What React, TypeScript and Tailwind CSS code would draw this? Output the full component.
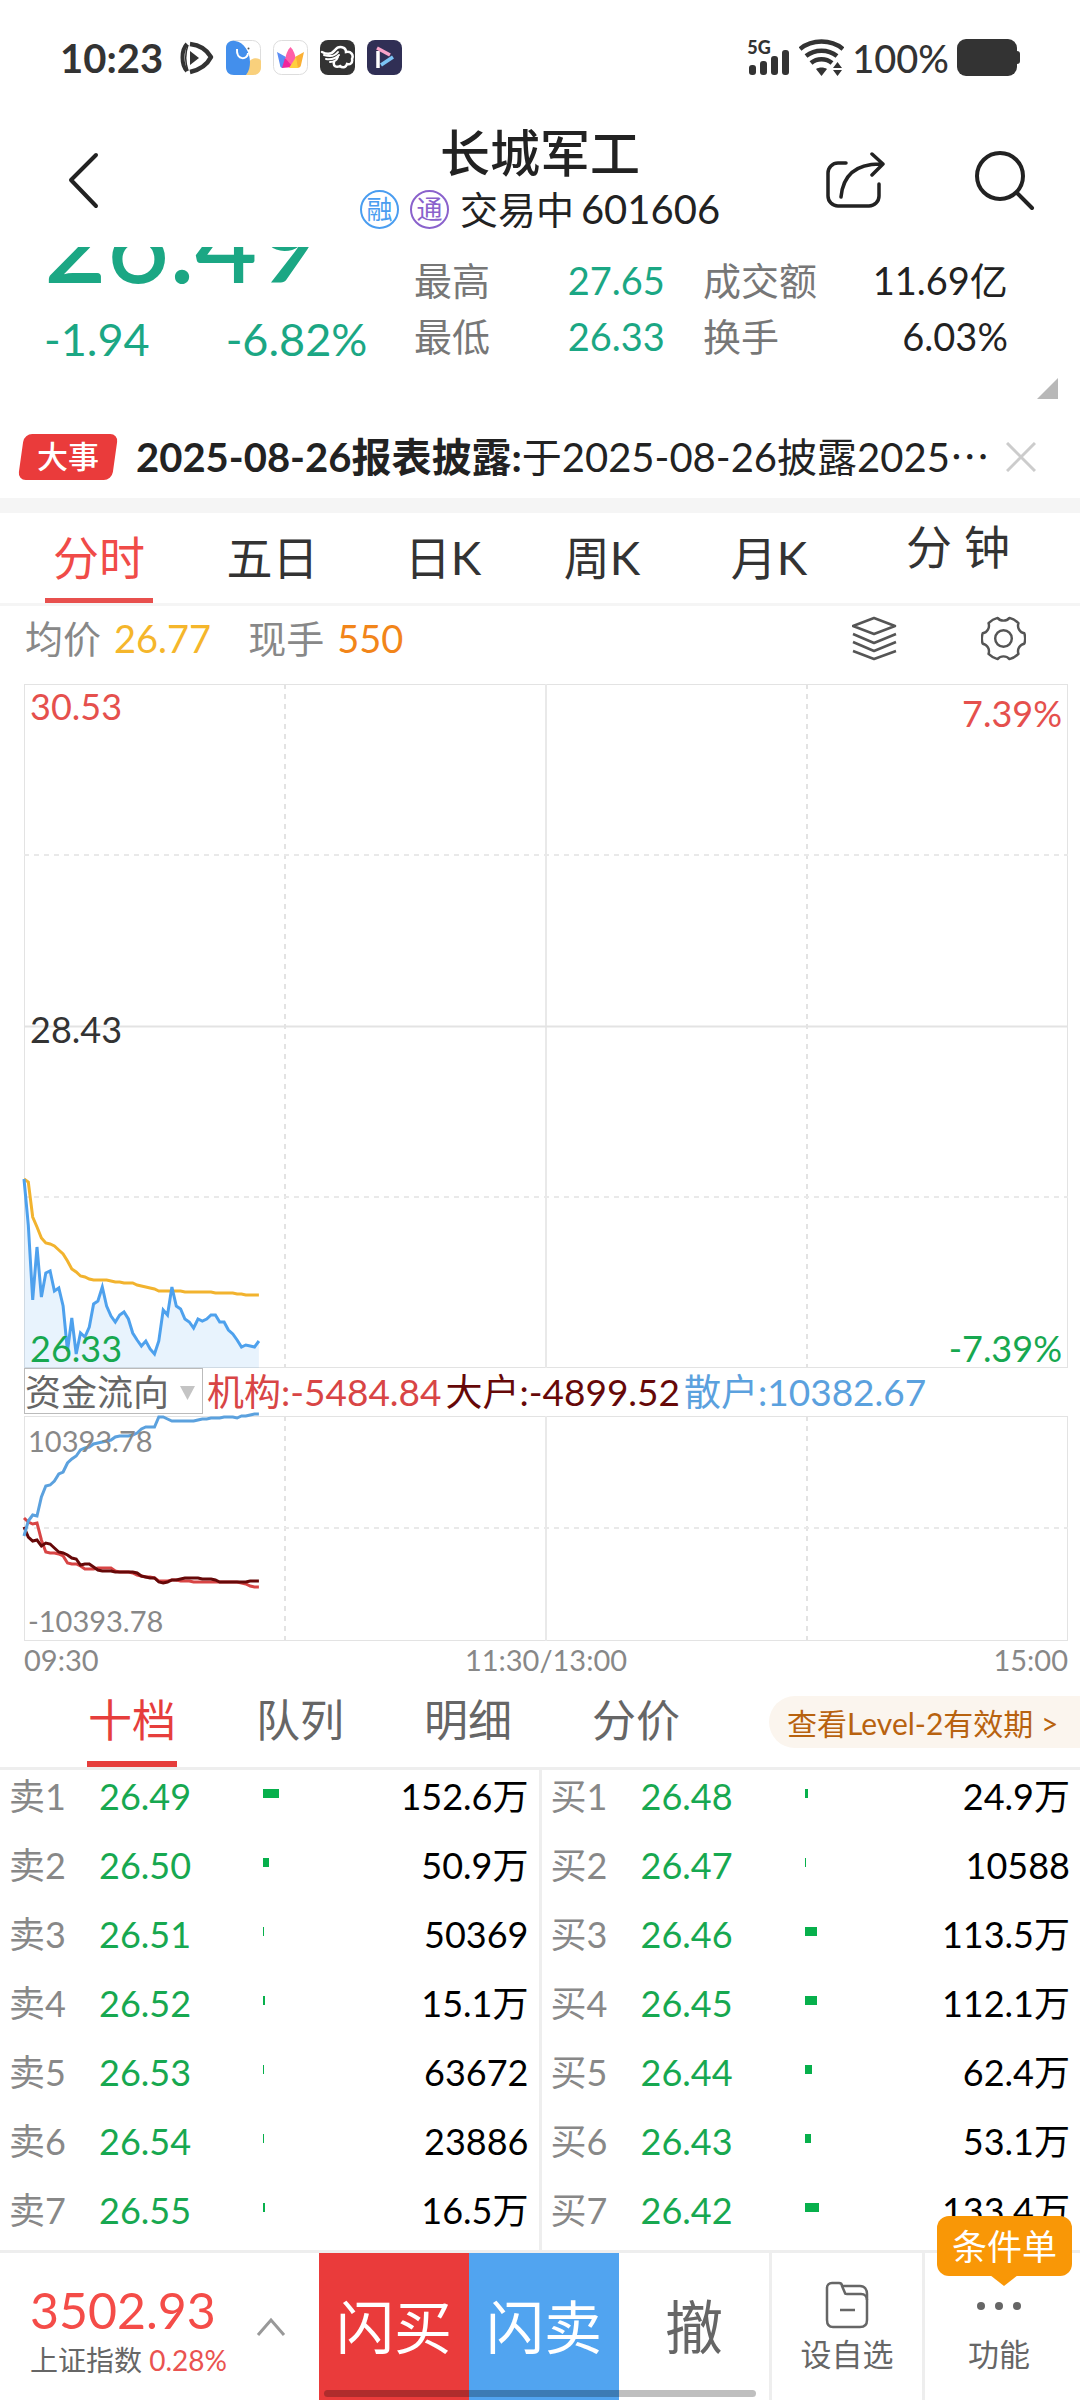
import clsx from "clsx"
import type { ReactNode } from "react"

// minute-by-minute series, measured down from the top edge of their own panel
const price = [
  495, 541, 616, 563, 613, 589, 587, 607, 604, 622, 667, 634, 670, 649, 653, 643, 620, 617, 603, 622, 632, 638, 631,
  628, 635, 649, 656, 662, 657, 665, 670, 657, 626, 631, 603, 622, 625, 635, 638, 644, 635, 637, 635, 631, 631, 638,
  638, 646, 650, 656, 663, 661, 662, 663, 657,
]
const average = [
  495, 498, 533, 543, 554, 559, 560, 562, 566, 570, 577, 585, 588, 592, 593, 595, 596, 596, 596, 596, 597, 598, 598,
  599, 599, 599, 601, 602, 603, 604, 605, 607, 607, 607, 607, 607, 607, 608, 608, 608, 608, 608, 608, 608, 609, 609,
  609, 609, 609, 610, 610, 611, 611, 611, 611,
]
const retail = [
  120, 105, 99, 100, 81, 70, 69, 65, 58, 56, 47, 43, 40, 34, 32, 31, 28, 27, 26, 25, 24, 21, 20, 20, 20, 19, 17, 13,
  11, 11, 11, 1, 1, 3, 5, 5, 5, 5, 5, 5, 4, 3, 3, 2, 2, 2, 1, 1, 1, 2, 0, 0, -1, -2, -2,
]
const institution = [
  102, 106, 108, 107, 124, 136, 137, 137, 138, 140, 147, 148, 148, 150, 153, 153, 153, 152, 152, 152, 152, 155, 156,
  156, 156, 157, 159, 160, 161, 161, 162, 165, 165, 165, 164, 164, 165, 165, 165, 166, 166, 166, 166, 166, 166, 166,
  166, 166, 166, 166, 167, 168, 170, 171, 171,
]
const major = [
  111, 121, 125, 124, 130, 127, 128, 132, 136, 137, 139, 142, 143, 149, 148, 148, 151, 154, 155, 155, 155, 156, 156,
  156, 156, 156, 157, 160, 161, 162, 162, 166, 167, 166, 164, 164, 163, 162, 162, 162, 162, 163, 163, 163, 164, 166,
  166, 166, 166, 166, 166, 166, 165, 165, 165,
]

type Order = { label: string; price: string; volume: string; amount: number }

const sells: Order[] = [
  { label: "卖1", price: "26.49", volume: "152.6万", amount: 152.6 },
  { label: "卖2", price: "26.50", volume: "50.9万", amount: 50.9 },
  { label: "卖3", price: "26.51", volume: "50369", amount: 5 },
  { label: "卖4", price: "26.52", volume: "15.1万", amount: 15.1 },
  { label: "卖5", price: "26.53", volume: "63672", amount: 6.4 },
  { label: "卖6", price: "26.54", volume: "23886", amount: 2.4 },
  { label: "卖7", price: "26.55", volume: "16.5万", amount: 16.5 },
]
const buys: Order[] = [
  { label: "买1", price: "26.48", volume: "24.9万", amount: 24.9 },
  { label: "买2", price: "26.47", volume: "10588", amount: 1 },
  { label: "买3", price: "26.46", volume: "113.5万", amount: 113.5 },
  { label: "买4", price: "26.45", volume: "112.1万", amount: 112.1 },
  { label: "买5", price: "26.44", volume: "62.4万", amount: 62.4 },
  { label: "买6", price: "26.43", volume: "53.1万", amount: 53.1 },
  { label: "买7", price: "26.42", volume: "133.4万", amount: 133.4 },
]

const STEP = 1044 / 240
const toPoints = (values: number[]) => values.map((y, i) => `${(i * STEP).toFixed(1)},${y}`).join(" ")

function StatusBar() {
  return (
    <div className="flex h-[115px] items-center justify-between pr-[60px] pl-[60px] text-[#333]">
      <div className="flex items-center gap-3">
        <span className="mr-1 text-[40px] leading-none font-bold">10:23</span>
        <svg className="h-[35px] w-[35px]" viewBox="0 0 35 35" fill="none" stroke="currentColor">
          <path d="M8 4C2 10 2 25 8 31" strokeWidth="4" />
          <path d="M11 4c9 1 17 6 21 13-4 8-12 13-21 15" strokeWidth="4.5" strokeLinejoin="round" />
          <path d="M9 5c-3 8-3 17 0 26" strokeWidth="1.5" />
          <path d="M11 11l9 7-9 7z" fill="currentColor" stroke="none" />
        </svg>
        <svg className="h-[35px] w-[35px]" viewBox="0 0 35 35">
          <rect x=".5" y=".5" width="34" height="34" rx="8" fill="#fff" stroke="#ddd" />
          <path d="M23 23c1-6 11-6 12-2v6c0 5-3 8-8 8h-7z" fill="#f9d07c" />
          <path d="M0 8C0 3 4 0 9 1c9 1 15 11 15 21 0 5-1 9-4 13H8c-5 0-8-3-8-8z" fill="#438fec" />
          <path d="M11 9c-1 12 11 11 11 4" fill="none" stroke="#fff" strokeWidth="2" />
          <circle cx="22.500" cy="8.500" r="1" fill="#555" />
        </svg>
        <svg className="h-[35px] w-[35px]" viewBox="0 0 35 35">
          <rect x=".5" y=".5" width="34" height="34" rx="8" fill="#fff" stroke="#ddd" />
          <path d="M4 12l9 5-3 11c-2 0-3-1-3-3z" fill="#5a8df5" />
          <path d="M31 12l-9 5 2 11c2 0 4-1 4-3z" fill="#fbb034" />
          <path d="M17.500 7c3 3 5 8 5 12l-5 9-5-9c0-4 2-9 5-12z" fill="#ff5fa8" />
          <path d="M12 18l8 9-11 1z" fill="#f0259c" />
          <path d="M23 17l-7 11h9z" fill="#ffcf3f" />
        </svg>
        <svg className="h-[35px] w-[35px]" viewBox="0 0 35 35" fill="none" stroke="#fff" strokeLinecap="round">
          <rect width="35" height="35" rx="8" fill="#333" stroke="none" />
          <path d="M2 12c6 3 10 2 13-2 4-5 11-3 11 2 5-1 8 3 6 7 1 4-2 6-5 5-1 4-5 4-7 2-4 2-7 0-6-4" strokeWidth="2.500" />
          <path d="M4 15c6 2 11 1 14-3M6 19c6 1 10-1 13-4M10 22c4 0 7-2 8-5" strokeWidth="2" />
        </svg>
        <svg className="h-[35px] w-[35px]" viewBox="0 0 35 35" fill="none" strokeWidth="3.500">
          <rect width="35" height="35" rx="8" fill="#302f55" />
          <path d="M11 11v17" stroke="#fff" />
          <path d="M10 8l13 7" stroke="#f9a3c8" />
          <path d="M26 17l-12 8" stroke="#7cc4f5" />
        </svg>
      </div>
      <div className="flex items-center gap-2">
        <div className="flex w-[44px] flex-col">
          <span className="text-[18px] leading-[14px] font-black">5G</span>
          <svg className="-mt-1 ml-[2px] h-[25px] w-[40px]" viewBox="0 0 40 25" fill="currentColor">
            <rect y="15" width="7" height="10" rx="3" />
            <rect x="11" y="11" width="7" height="14" rx="3" />
            <rect x="22" y="6" width="7" height="19" rx="3" />
            <rect x="33" width="7" height="25" rx="3" />
          </svg>
        </div>
        <svg className="h-[37px] w-[45px]" viewBox="0 0 45 37" fill="none" stroke="currentColor" strokeWidth="4.500">
          <path d="M1 10c12-10 31-10 43 0" />
          <path d="M7 17c9-7 22-7 31 0" />
          <path d="M12 24c6-5 15-5 21 0" />
          <path d="M17 30c3-2 8-2 11 0l-5.500 7z" fill="currentColor" stroke="none" />
          <path d="M34 29l4.500-6 4.500 6zM34 31h9l-4.500 6z" fill="currentColor" stroke="none" />
        </svg>
        <span className="text-[38px] leading-none font-medium">100%</span>
        <svg className="h-[37px] w-[63px]" viewBox="0 0 63 37" fill="currentColor">
          <rect width="60" height="37" rx="9" />
          <path d="M60 12c2 0 3 1 3 3v7c0 2-1 3-3 3z" />
        </svg>
      </div>
    </div>
  )
}

function Header() {
  return (
    <header className="grid h-[132px] grid-cols-[1fr_auto_1fr] items-start text-[#222]">
      <button aria-label="返回" className="mt-9 ml-[64px] w-[40px]">
        <svg className="h-[60px] w-[40px]" viewBox="0 0 40 60" fill="none" stroke="currentColor" strokeWidth="4">
          <path d="M32 4L7 29l25 26" strokeLinecap="round" strokeLinejoin="round" />
        </svg>
      </button>
      <div className="flex flex-col items-center pt-2">
        <h1 className="text-[50px] leading-[60px] font-medium">长城军工</h1>
        <div className="flex items-center gap-[11px] leading-[52px]">
          <span className="flex h-[39px] w-[39px] items-center justify-center rounded-full border-2 border-[#4a9df0] text-[26px] leading-none text-[#4a9df0]">
            融
          </span>
          <span className="flex h-[39px] w-[39px] items-center justify-center rounded-full border-2 border-[#8a62cc] text-[26px] leading-none text-[#8a62cc]">
            通
          </span>
          <span className="text-[38px]">交易中</span>
          <span className="-ml-1 text-[40px]">601606</span>
        </div>
      </div>
      <div className="mt-9 flex justify-end gap-[90px] pr-[45px]">
        <button aria-label="分享">
          <svg className="h-[60px] w-[60px]" viewBox="0 0 60 60" fill="none" stroke="currentColor" strokeWidth="3.500">
            <path d="M21 12h-8A10 10 0 0 0 3 22v23a10 10 0 0 0 10 10h31a10 10 0 0 0 10-10V33" strokeLinecap="round" />
            <path d="M16 46c2-22 15-34 42-33M47 3l11 10-11 11" strokeLinecap="round" strokeLinejoin="round" />
          </svg>
        </button>
        <button aria-label="搜索">
          <svg className="h-[60px] w-[60px]" viewBox="0 0 60 60" fill="none" stroke="currentColor" strokeWidth="4">
            <circle cx="25" cy="25" r="23" />
            <path d="M42 42l15 15" strokeLinecap="round" />
          </svg>
        </button>
      </div>
    </header>
  )
}

function Quote() {
  return (
    <section className="flex h-[171px] pr-[22px]">
      <div className="w-[414px] pl-[44px] text-[#1ba784]">
        {/* scrolled part-way under the header */}
        <div className="flex h-[62px] items-end overflow-hidden pb-4">
          <span className="text-[108px] leading-[104px] font-medium">26.49</span>
        </div>
        <div className="flex gap-[76px] text-[45px] leading-[60px]">
          <span>-1.94</span>
          <span>-6.82%</span>
        </div>
      </div>
      <div className="flex-1 pt-[5px] text-[38px] leading-[56px] text-[#222]">
        <dl className="grid grid-cols-[80fr_170fr_38fr_120fr_184fr_50fr]">
          <dt className="text-[#777]">最高</dt>
          <dd className="text-right text-[#1ba784]">27.65</dd>
          <dt className="col-start-4 text-[#777]">成交额</dt>
          <dd className="text-right whitespace-nowrap">11.69亿</dd>
          <dt className="col-start-1 text-[#777]">最低</dt>
          <dd className="text-right text-[#1ba784]">26.33</dd>
          <dt className="col-start-4 text-[#777]">换手</dt>
          <dd className="text-right">6.03%</dd>
        </dl>
        <svg className="mt-[14px] ml-auto h-[21px] w-[21px]" viewBox="0 0 21 21">
          <path d="M21 0v21H0z" fill="#b8b8b8" />
        </svg>
      </div>
    </section>
  )
}

function Notice() {
  return (
    <section className="flex h-[80px] items-center pr-[44px] pb-[3px] pl-[18px] text-[40px] text-[#222]">
      <span className="relative flex h-[46px] w-[100px] shrink-0 items-center justify-center text-[31px] leading-none font-medium text-white">
        <span className="absolute inset-x-[3px] inset-y-0 -skew-x-8 rounded-lg bg-[#ea3b3b]" />
        <span className="relative">大事</span>
      </span>
      <p className="ml-[18px] flex-1 overflow-hidden leading-[52px] whitespace-nowrap">
        <b>2025-08-26报表披露:</b>于2025-08-26披露2025⋯
      </p>
      <button aria-label="关闭" className="shrink-0">
        <svg className="h-[30px] w-[30px]" viewBox="0 0 30 30" stroke="#ccc" strokeWidth="3">
          <path d="M1 1l28 28M29 1L1 29" />
        </svg>
      </button>
    </section>
  )
}

function PeriodTabs() {
  return (
    <nav className="grid h-[93px] grid-cols-[174fr_173fr_168fr_150fr_184fr_194fr] border-b-[3px] border-[#f5f5f5] pr-[25px] pl-3 text-[46px] text-[#333]">
      <button className="flex flex-col items-center justify-between text-[#f04b48]">
        <span className="pt-[15px] leading-[60px]">分时</span>
        <span className="h-[5px] w-[108px] bg-[#e8504e]" />
      </button>
      {["五日", "日K", "周K", "月K"].map((name) => (
        <button key={name} className="self-start pt-[15px] leading-[60px]">
          {name}
        </button>
      ))}
      <button className="self-start pt-1 leading-[60px]">分 钟</button>
    </nav>
  )
}

function ChartInfo() {
  return (
    <div className="flex h-[78px] items-start justify-between pr-[54px] pl-[25px] text-[38px] leading-[64px]">
      <div className="flex gap-[13px] text-[#888]">
        <span>均价</span>
        <span className="text-[#f5b62b]">26.77</span>
        <span className="ml-6">现手</span>
        <span className="text-[#f28519]">550</span>
      </div>
      <div className="flex gap-[84px] pt-[10px] text-[#555]">
        <button aria-label="叠加">
          <svg className="h-[45px] w-[45px]" viewBox="0 0 45 45" fill="none" stroke="currentColor" strokeWidth="2.500">
            <path d="M1 10l21-8 21 8-21 8zM1 18l21 9 22-9M1 26l21 9 22-9M1 35l21 8 22-8" strokeLinejoin="round" />
          </svg>
        </button>
        <button aria-label="设置">
          <svg className="h-[45px] w-[45px]" viewBox="-23 -23 46 46" fill="none" stroke="currentColor" strokeWidth="2.500">
            <path
              d="M-6.100-21.100A8 8 0 0 0 6.100-21.100Q11-20 15.300-15.800A8 8 0 0 0 21.300-5.300Q23 0 21.300 5.300A8 8 0 0 0 15.300 15.800Q11 20 6.100 21.100A8 8 0 0 0-6.100 21.100Q-11 20-15.300 15.800A8 8 0 0 0-21.300 5.300Q-23 0-21.300-5.300A8 8 0 0 0-15.300-15.800Q-11-20-6.100-21.100Z"
              strokeLinejoin="round"
            />
            <circle r="8.500" />
          </svg>
        </button>
      </div>
    </div>
  )
}

function Panel({ height, dashed, className, children }: { height: number; dashed: number[]; className: string; children: ReactNode }) {
  return (
    <svg
      className={clsx("block w-full overflow-visible", className)}
      viewBox={`0 0 1044 ${height}`}
      preserveAspectRatio="none"
      fill="none"
    >
      <g stroke="#e3e3e3">
        <rect x=".5" y=".5" width="1043" height={height - 1} />
        <path d={`M522 0V${height}`} strokeWidth="2" stroke="#e9e9e9" />
        <path d={`M261 0V${height}M783 0V${height}`} strokeWidth="2" strokeDasharray="5 5" />
        {dashed.map((y) => (
          <path key={y} d={`M0 ${y}H1044`} strokeWidth="2" strokeDasharray="5 5" stroke="#e9e9e9" />
        ))}
      </g>
      {children}
    </svg>
  )
}

function Chart() {
  const line = toPoints(price)
  return (
    <section className="pr-3 pl-6">
      <div className="relative text-[36px] leading-[40px]">
        <Panel height={684} dashed={[171, 513]} className="h-[684px]">
          <path d="M0 342.500H1044" stroke="#e3e3e3" strokeWidth="2" />
          <polygon points={`0,684 ${line} ${54 * STEP},684`} fill="#4ea1ed" fillOpacity=".13" />
          <polyline points={toPoints(average)} stroke="#f2b32e" strokeWidth="3" />
          <polyline points={line} stroke="#4ea1ed" strokeWidth="3" />
        </Panel>
        <span className="absolute top-[2px] left-[6px] text-[#e5504d]">30.53</span>
        <span className="absolute top-[9px] right-[6px] text-[#e5504d]">7.39%</span>
        <span className="absolute top-[325px] left-[6px] text-[#333]">28.43</span>
        <span className="absolute bottom-0 left-[6px] text-[#17a850]">26.33</span>
        <span className="absolute right-[6px] bottom-0 text-[#17a850]">-7.39%</span>
      </div>
      <div className="flex h-[48px] items-center gap-1 text-[37px] leading-[46px] whitespace-nowrap">
        <div className="relative h-[46px] w-[179px] shrink-0 self-start">
          <select
            aria-label="指标"
            className="h-full w-full appearance-none border border-[#bbb] bg-transparent text-[36px] text-[#666]"
          >
            <option>资金流向</option>
          </select>
          <svg className="absolute top-[18px] right-2 h-[14px] w-[15px]" viewBox="0 0 15 14">
            <path d="M0 0h15L7.500 14z" fill="#c4c4c4" />
          </svg>
        </div>
        <span className="text-[#d84545]">机构:-5484.84</span>
        <span className="text-[#660808]">大户:-4899.52</span>
        <span className="text-[#5ba1de]">散户:10382.67</span>
      </div>
      <div className="relative text-[29px] leading-[32px] text-[#888]">
        <Panel height={225} dashed={[112]} className="h-[225px]">
          <polyline points={toPoints(institution)} stroke="#d84545" strokeWidth="3" />
          <polyline points={toPoints(major)} stroke="#660808" strokeWidth="3" />
          <polyline points={toPoints(retail)} stroke="#5ba1de" strokeWidth="3" />
        </Panel>
        <span className="absolute top-[9px] left-1">10393.78</span>
        <span className="absolute bottom-1 left-1">-10393.78</span>
      </div>
      <div className="grid h-[40px] grid-cols-3 text-[29px] leading-[38px] text-[#888]">
        <span>09:30</span>
        <span className="text-center">11:30/13:00</span>
        <span className="text-right">15:00</span>
      </div>
    </section>
  )
}

function DepthTabs() {
  return (
    <nav className="flex h-[89px] items-start justify-between border-b-[3px] border-[#eee] pl-12 text-[44px] text-[#666]">
      <div className="grid h-full w-[672px] grid-cols-4">
        <button className="flex flex-col items-center justify-between text-[#e63e3c]">
          <span className="pt-[9px] leading-[60px]">十档</span>
          <span className="h-[6px] w-[90px] bg-[#e63e3c]" />
        </button>
        {["队列", "明细", "分价"].map((name) => (
          <button key={name} className="self-start pt-[9px] leading-[60px]">
            {name}
          </button>
        ))}
      </div>
      <a
        href="#level2"
        className="mt-[15px] h-[52px] w-[311px] rounded-l-full bg-[#fbf5ee] pl-[18px] text-[30px] leading-[54px] whitespace-nowrap text-[#b8620f]"
      >
        查看Level-2有效期 &gt;
      </a>
    </nav>
  )
}

function OrderTable({ orders, name }: { orders: Order[]; name: string }) {
  return (
    <table aria-label={name} className="w-full table-fixed text-[36px] leading-[52px]">
      <colgroup>
        <col className="w-[99px]" />
        <col className="w-[164px]" />
        <col className="w-[80px]" />
        <col />
      </colgroup>
      <tbody>
        {orders.map((o) => (
          <tr key={o.label} className="h-[69px] align-top">
            <th scope="row" className="pl-[9px] text-left font-normal text-[#888]">
              {o.label}
            </th>
            <td className="text-[#17a850]">{o.price}</td>
            <td className="pt-[19px]">
              <div className="h-[9px] bg-[#07b04c]" style={{ width: Math.ceil(o.amount / 9.6) }} />
            </td>
            <td className="pr-[10px] text-right text-black">{o.volume}</td>
          </tr>
        ))}
      </tbody>
    </table>
  )
}

function BottomBar() {
  return (
    <footer className="relative grid h-[150px] grid-cols-[319fr_150fr_150fr_153fr_153fr_155fr] border-t-[3px] border-[#eee] text-[#666]">
      <button className="flex items-center justify-between pr-[33px] pl-[30px] text-left">
        <span className="flex flex-col pt-[10px]">
          <span className="text-[50px] leading-[56px] text-[#f44c48]">3502.93</span>
          <span className="text-[28px] leading-[44px] whitespace-nowrap">
            上证指数 <span className="text-[#ea5350]">0.28%</span>
          </span>
        </span>
        <svg className="h-[20px] w-[30px] shrink-0" viewBox="0 0 30 20" fill="none" stroke="#999" strokeWidth="3">
          <path d="M2 18L15 3l13 15" />
        </svg>
      </button>
      <button className="bg-[#ea3b3b] text-[58px] text-white">闪买</button>
      <button className="bg-[#51a4f0] text-[58px] text-white">闪卖</button>
      <button className="border-r-[3px] border-[#eee] text-[58px]">撤</button>
      <button className="flex flex-col items-center border-r-[3px] border-[#eee] pt-7">
        <svg className="h-[48px] w-[44px]" viewBox="0 0 44 48" fill="none" stroke="currentColor" strokeWidth="2.500">
          <path d="M7 2h7c2 0 3 1 3 3l3 7c0 1 1 1 2 1h14c4 0 6 3 6 6v20c0 5-3 7-7 7H8c-4 0-6-3-6-7V7c0-3 2-5 5-5z" />
          <path d="M17 5h18c5 0 7 4 7 8v6M15 29h15" />
        </svg>
        <span className="text-[31px] leading-[50px]">设自选</span>
      </button>
      <button className="relative flex flex-col items-center pt-7 pr-[7px]">
        <svg className="h-[48px] w-[48px]" viewBox="0 0 48 48" fill="currentColor">
          <circle cx="6" cy="25" r="4" />
          <circle cx="24" cy="25" r="4" />
          <circle cx="42" cy="25" r="4" />
        </svg>
        <span className="text-[31px] leading-[50px]">功能</span>
        <span className="absolute -top-[37px] right-2 flex h-[60px] w-[135px] items-center justify-center rounded-xl bg-[#f99706] text-[35px] leading-none text-white">
          条件单
          <svg className="absolute top-[59px] left-[53px] h-[11px] w-[28px]" viewBox="0 0 28 11">
            <path d="M0 0h28L14 11z" fill="#f99706" />
          </svg>
        </span>
      </button>
      <span className="absolute bottom-[3px] left-[30%] h-[7px] w-[40%] rounded-full bg-black/25" />
    </footer>
  )
}

export default function App() {
  return (
    <main className="w-full overflow-hidden bg-white font-['Lato','Noto_Sans_CJK_SC',sans-serif]" lang="zh-CN">
      <StatusBar />
      <Header />
      <Quote />
      <Notice />
      <div className="h-[15px] bg-[#f5f5f5]" />
      <PeriodTabs />
      <ChartInfo />
      <Chart />
      <DepthTabs />
      <section className="flex h-[480px] overflow-hidden">
        <div className="flex-1 border-r-[3px] border-[#eee]">
          <OrderTable orders={sells} name="卖盘" />
        </div>
        <div className="flex-1">
          <OrderTable orders={buys} name="买盘" />
        </div>
      </section>
      <BottomBar />
    </main>
  )
}
